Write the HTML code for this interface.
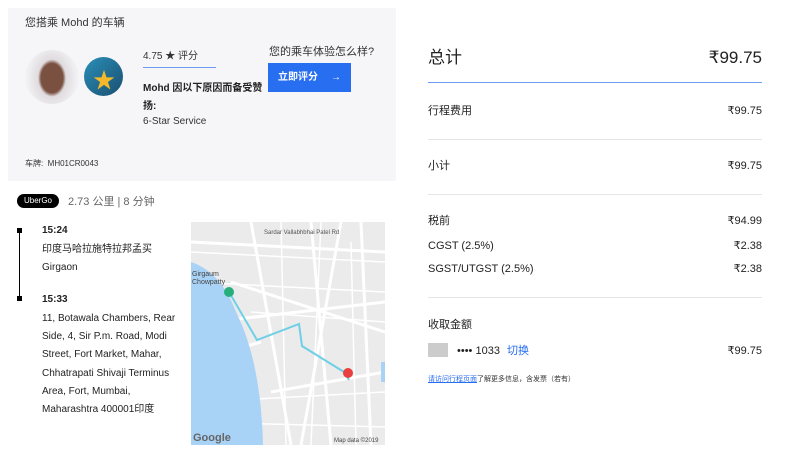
<!DOCTYPE html><html><head><meta charset="utf-8"><style>
body{margin:0;width:800px;height:462px;background:#fff;font-family:"Liberation Sans","Noto Sans CJK SC",sans-serif;color:#222;position:relative;overflow:hidden}
.a{position:absolute;white-space:nowrap}
.r{font-size:11px;line-height:14px}
.hr{position:absolute;left:428px;width:334px;height:1px;background:#e5e5e5}
</style></head><body>
<div class="a" style="left:8px;top:8px;width:388px;height:173px;background:#f6f6f8"></div>
<div class="a" style="left:25px;top:14px;font-size:11px;color:#333">您搭乘 Mohd 的车辆</div>
<div class="a" style="left:25px;top:50px;width:54px;height:54px;border-radius:50%;background:radial-gradient(ellipse 12px 16px at 50% 52%,#7a5040 0 11px,#e0dce0 14px,#f2f2f4 26px)"></div>
<div class="a" style="left:84px;top:57px;width:39px;height:39px;border-radius:50%;background:linear-gradient(135deg,#2a8fb8,#1a4f70)"><span style="position:absolute;left:9px;top:6px;color:#f5b82a;font-size:22px">★</span></div>
<div class="a" style="left:143px;top:47px;font-size:10px;color:#333">4.75 ★ 评分</div>
<div class="a" style="left:143px;top:67px;width:73px;height:1px;background:#6f9cf0"></div>
<div class="a" style="left:143px;top:80px;font-size:10px;font-weight:bold;line-height:18px">Mohd 因以下原因而备受赞<br>扬:</div>
<div class="a" style="left:143px;top:116px;font-size:10px;color:#333">6-Star Service</div>
<div class="a" style="left:269px;top:43px;font-size:11px;color:#333">您的乘车体验怎么样?</div>
<div class="a" style="left:268px;top:63px;width:83px;height:29px;background:#276ef1;color:#fff;font-size:10px;font-weight:bold;line-height:29px"><span style="margin-left:10px">立即评分</span><span style="position:absolute;right:10px">→</span></div>
<div class="a" style="left:25px;top:158px;font-size:8px;color:#333">车牌:&nbsp;&nbsp;MH01CR0043</div>
<div class="a" style="left:17px;top:194px;width:42px;height:14px;border-radius:7px;background:#000;color:#fff;font-size:8px;line-height:14px;text-align:center">UberGo</div>
<div class="a" style="left:68px;top:193px;font-size:11px;color:#666">2.73 公里 | 8 分钟</div>
<div class="a" style="left:19px;top:230px;width:1px;height:68px;background:#000"></div>
<div class="a" style="left:17px;top:228px;width:5px;height:5px;background:#000"></div>
<div class="a" style="left:17px;top:296px;width:5px;height:5px;background:#000"></div>
<div class="a" style="left:42px;top:225px;font-size:10px;font-weight:bold">15:24</div>
<div class="a" style="left:42px;top:241px;font-size:10px;line-height:18px">印度马哈拉施特拉邦孟买<br>Girgaon</div>
<div class="a" style="left:42px;top:294px;font-size:10px;font-weight:bold">15:33</div>
<div class="a" style="left:42px;top:310px;font-size:10px;line-height:18.2px">11, Botawala Chambers, Rear<br>Side, 4, Sir P.m. Road, Modi<br>Street, Fort Market, Mahar,<br>Chhatrapati Shivaji Terminus<br>Area, Fort, Mumbai,<br>Maharashtra 400001印度</div>
<svg class="a" style="left:191px;top:222px" width="194" height="223" viewBox="0 0 194 223">
<rect width="194" height="223" fill="#ebebeb"/>
<g stroke="#fff" stroke-width="1.5" fill="none"><path d="M0 30L194 40M0 60L194 70M10 180L194 170M90 0L95 223M130 0L120 223M160 20L165 223M0 200L194 205M60 90L194 100"/></g>
<g stroke="#fff" stroke-width="3" fill="none"><path d="M0 20L194 30M60 0L100 223M120 0L140 223M150 0L110 223M20 100L194 80M80 170L194 150M170 0L180 223M40 60L194 110M0 140L70 120"/></g>
<path d="M0 40Q30 50 45 90Q70 140 72 223L0 223Z" fill="#a9d2f7"/>
<path d="M190 140L194 140L194 160L190 160Z" fill="#a9d2f7"/>
<path d="M38 70L66 118L108 102L111 124L153 150L158 158" stroke="#6fcfe6" stroke-width="2" fill="none"/>
<circle cx="38" cy="70" r="5" fill="#27ae7a"/><circle cx="157" cy="151" r="5" fill="#e84040"/>
<text x="1" y="54" font-size="7" fill="#444">Girgaum</text><text x="1" y="62" font-size="7" fill="#444">Chowpatty</text>
<text x="73" y="12" font-size="6" fill="#555">Sardar Vallabhbhai Patel Rd</text>
<text x="2" y="219" font-size="11" font-weight="bold" fill="#666">Google</text>
<text x="143" y="220" font-size="6" fill="#444">Map data ©2019</text></svg>
<div class="a" style="left:428px;top:48px;font-size:17px;line-height:20px">总计</div>
<div class="a" style="right:38px;top:48px;font-size:17px;line-height:20px">₹99.75</div>
<div class="a" style="left:428px;top:82px;width:334px;height:1px;background:#6f9cf0"></div>
<div class="a r" style="left:428px;top:104px">行程费用</div><div class="a r" style="right:38px;top:104px">₹99.75</div>
<div class="hr" style="top:139px"></div>
<div class="a r" style="left:428px;top:159px">小计</div><div class="a r" style="right:38px;top:159px">₹99.75</div>
<div class="hr" style="top:194px"></div>
<div class="a r" style="left:428px;top:214px">税前</div><div class="a r" style="right:38px;top:214px">₹94.99</div>
<div class="a r" style="left:428px;top:239px">CGST (2.5%)</div><div class="a r" style="right:38px;top:239px">₹2.38</div>
<div class="a r" style="left:428px;top:262px">SGST/UTGST (2.5%)</div><div class="a r" style="right:38px;top:262px">₹2.38</div>
<div class="hr" style="top:297px"></div>
<div class="a r" style="left:428px;top:318px">收取金额</div>
<div class="a" style="left:428px;top:343px;width:20px;height:14px;background:#ccc"></div>
<div class="a r" style="left:457px;top:344px">•••• 1033 <span style="color:#276ef1;margin-left:4px">切换</span></div>
<div class="a r" style="right:38px;top:344px">₹99.75</div>
<div class="a" style="left:428px;top:374px;font-size:7px;color:#333"><span style="color:#276ef1;text-decoration:underline">请访问行程页面</span>了解更多信息，含发票（若有）</div>
</body></html>
